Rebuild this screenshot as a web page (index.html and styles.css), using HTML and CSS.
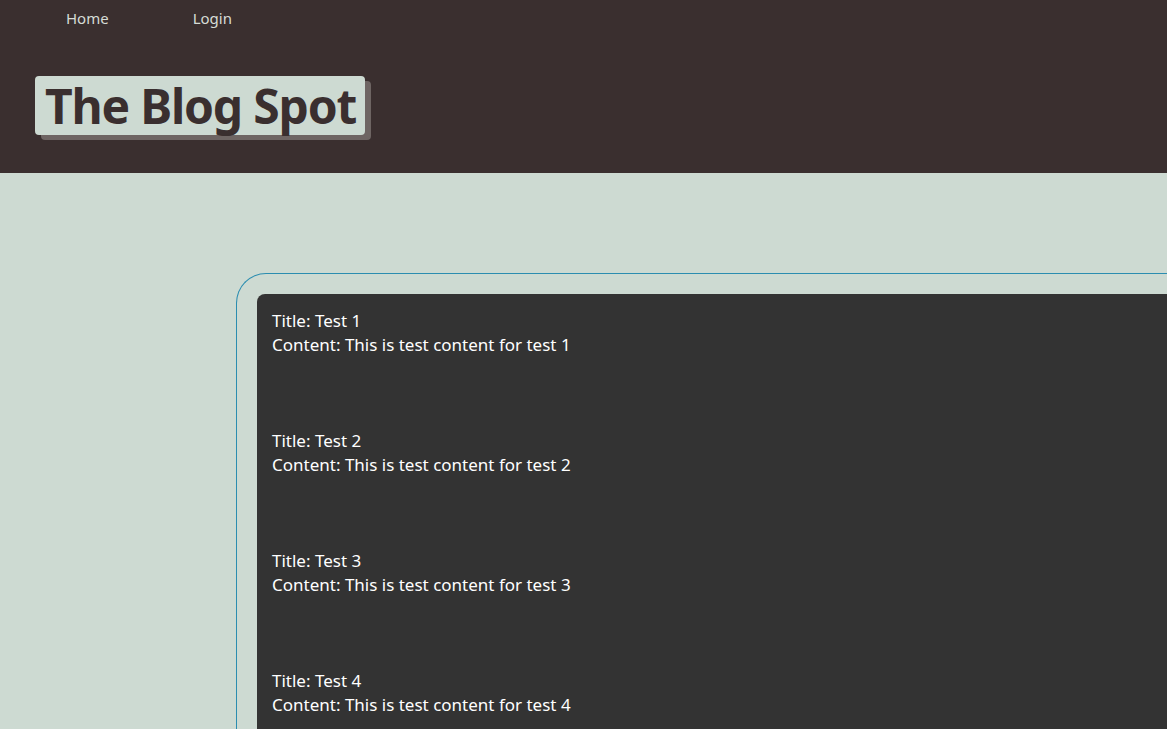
FILE: index.html
```html
<!DOCTYPE html>
<html>
<head>
<meta charset="utf-8">
<link rel="stylesheet" href="styles.css">
</head>
<body>
<header class="site-header">
  <nav class="nav">
    <a class="nav-link" href="#">Home</a>
    <a class="nav-link" href="#">Login</a>
  </nav>
  <div class="brand-wrap">
    <h1 class="brand">The Blog Spot</h1>
  </div>
</header>
<main class="main">
  <section class="frame">
    <div class="card">
      <div class="post">
        <div>Title: Test 1</div>
        <div>Content: This is test content for test 1</div>
      </div>
      <div class="post">
        <div>Title: Test 2</div>
        <div>Content: This is test content for test 2</div>
      </div>
      <div class="post">
        <div>Title: Test 3</div>
        <div>Content: This is test content for test 3</div>
      </div>
      <div class="post">
        <div>Title: Test 4</div>
        <div>Content: This is test content for test 4</div>
      </div>
    </div>
  </section>
</main>
</body>
</html>
```
FILE: styles.css
```css
html, body {
  margin: 0;
  padding: 0;
  overflow: hidden;
  background: #cddad2;
}
body {
  height: 100vh;
  display: flex;
  flex-direction: column;
}
.site-header {
  background: #3a2f2f;
  height: 173px;
  flex: 0 0 173px;
  display: flex;
  flex-direction: column;
}
.nav {
  display: flex;
  gap: 84px;
  padding: 8px 0 0 66px;
  height: 20px;
}
.nav-link {
  font-family: "Noto Sans", sans-serif;
  font-size: 15px;
  color: #d6dcd6;
  text-decoration: none;
  line-height: 20px;
}
.brand-wrap {
  padding: 48px 0 0 35px;
  display: flex;
}
.brand {
  margin: 0;
  background: #cddad2;
  color: #3a2f2f;
  font-family: "Noto Sans", sans-serif;
  font-weight: 700;
  font-size: 48px;
  letter-spacing: -1.2px;
  line-height: 59px;
  height: 59px;
  padding: 0 9px 0 10px;
  border-radius: 4px;
  box-shadow: 6px 5px 0 #6e6563;
}
.main {
  flex: 1;
  min-height: 0;
  padding: 100px 0 0 236px;
  display: flex;
}
.frame {
  flex: 1;
  border-top: 1px solid #2b8db0;
  border-left: 1px solid #2b8db0;
  border-radius: 30px 0 0 0;
  padding: 20px 0 0 20px;
  display: flex;
}
.card {
  flex: 1;
  background: #333333;
  border-radius: 8px 0 0 0;
  padding: 15px 15px 0;
  font-family: "Noto Sans", sans-serif;
  font-size: 17px;
  line-height: 24px;
  color: #ffffff;
  overflow: hidden;
}
.post {
  height: 120px;
}
```
